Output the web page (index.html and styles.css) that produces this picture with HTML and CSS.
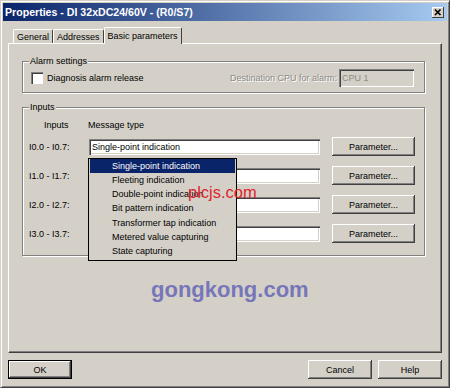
FILE: index.html
```html
<!DOCTYPE html>
<html>
<head>
    <meta charset="utf-8">
    <title>Properties - DI 32xDC24/60V - (R0/S7)</title>
    <link rel="stylesheet" href="styles.css">
</head>
<body>

<div class="window">
    <!--title bar-->
    <div class="titlebar">
        <span class="title">Properties - DI 32xDC24/60V - (R0/S7)</span>
        <span class="close">
            <svg width="12" height="11" viewBox="0 0 12 11">
                <path d="M3 2.5 L8.5 8 M8.5 2.5 L3 8" stroke="#000" stroke-width="1.7" fill="none"/>
            </svg>
        </span>
    </div>

    <!--tabs-->
    <div class="tabs">
        <div class="tab">General</div>
        <div class="tab">Addresses</div>
        <div class="tab active">Basic parameters</div>
    </div>

    <div class="panel">
        <fieldset class="group alarm">
            <legend>Alarm settings</legend>
            <div class="alarm-row">
                <label class="check"><span class="box"></span>Diagnosis alarm release</label>
                <div class="dest">
                    <span class="grey">Destination CPU for alarm:</span>
                    <span class="field disabled">CPU 1</span>
                </div>
            </div>
        </fieldset>

        <fieldset class="group inputs">
            <legend>Inputs</legend>
            <div class="head">
                <span class="head-label">Inputs</span>
                <span>Message type</span>
            </div>
            <div class="row">
                <span class="label">I0.0 - I0.7:</span>
                <div class="field combo">Single-point indication
                    <ul class="popup">
                        <li class="selected">Single-point indication</li>
                        <li>Fleeting indication</li>
                        <li>Double-point indication</li>
                        <li>Bit pattern indication</li>
                        <li>Transformer tap indication</li>
                        <li>Metered value capturing</li>
                        <li>State capturing</li>
                    </ul>
                </div>
                <button class="btn param">Parameter...</button>
            </div>
            <div class="row">
                <span class="label">I1.0 - I1.7:</span>
                <div class="field combo"></div>
                <button class="btn param">Parameter...</button>
            </div>
            <div class="row">
                <span class="label">I2.0 - I2.7:</span>
                <div class="field combo"></div>
                <button class="btn param">Parameter...</button>
            </div>
            <div class="row">
                <span class="label">I3.0 - I3.7:</span>
                <div class="field combo"></div>
                <button class="btn param">Parameter...</button>
            </div>
        </fieldset>

        <!--watermarks-->
        <div class="mark-plc">plcjs.com</div>
        <div class="mark-gk">gongkong.com</div>
    </div>

    <div class="footer">
        <button class="btn ok">OK</button>
        <span class="spacer"></span>
        <button class="btn">Cancel</button>
        <button class="btn">Help</button>
    </div>
</div>

</body>
</html>
```

FILE: styles.css
```css
*{ margin: 0; padding: 0; box-sizing: border-box; }
body{ background: #d4d0c8; font: 9px/12px "Liberation Sans", Arial, sans-serif; color: #000; }
ul{ list-style: none; }

/*window frame*/
.window{ width: 450px; height: 388px; padding: 2px;
    border: 1px solid; border-color: #d4d0c8 #404040 #404040 #d4d0c8;
    box-shadow: inset 1px 1px 0 #fff, inset -1px -1px 0 #808080; }

.titlebar{ height: 18px; display: flex; align-items: center; justify-content: space-between;
    padding: 0 3px 0 2px; background: linear-gradient(to right, #0a246a, #a6caf0); }
.title{ color: #fff; font: bold 10.6px/18px "Liberation Sans", Arial, sans-serif; }
.close{ width: 12px; height: 11px; background: #d4d0c8; display: block;
    box-shadow: inset -1px -1px 0 #404040, inset 1px 1px 0 #fff; }
.close svg{ display: block; }

/*tabs*/
.tabs{ display: flex; align-items: flex-end; height: 16px; margin-top: 6px; padding-left: 10px; }
.tab{ height: 14px; line-height: 14px; padding: 0 3px; background: #d4d0c8;
    border-top: 1px solid #fff; border-left: 1px solid #fff; border-right: 1px solid #404040;
    border-radius: 2px 2px 0 0; }
.tab.active{ height: 17px; line-height: 16px; margin-bottom: -1px; position: relative; z-index: 1; }

/*tab page*/
.panel{ position: relative; height: 310px; margin: 0 5px; background: #d4d0c8;
    border: 1px solid; border-color: #fff #404040 #404040 #fff;
    box-shadow: inset -1px -1px 0 #808080; }

.group{ border: 1px solid #808080; box-shadow: inset 1px 1px 0 #fff, 1px 1px 0 #fff; min-width: 0; }
.group legend{ padding: 0 1px; line-height: 12px; background: #d4d0c8; }
.alarm{ margin: 11px 16px 0 13px; padding: 2px 10px 5px 6px; }
.inputs{ margin: 8px 16px 0 13px; padding: 6px 9px 12px 6px; }

.alarm-row{ display: flex; align-items: center; height: 18px; padding-left: 2px; }
.check{ display: flex; align-items: center; }
.box{ width: 12px; height: 12px; margin-right: 4px; background: #fff;
    box-shadow: inset 1px 1px 0 #808080, inset 2px 2px 0 #404040, inset -1px -1px 0 #fff; }
.dest{ margin-left: auto; display: flex; align-items: center; }
.grey{ color: #8c8a84; text-shadow: 1px 1px 0 #fff; margin-right: 2px; }

.field{ background: #fff; height: 16px; line-height: 16px; padding-left: 3px;
    box-shadow: inset 1px 1px 0 #808080, inset 2px 2px 0 #404040, inset -1px -1px 0 #fff, inset -2px -2px 0 #d4d0c8; }
.field.disabled{ width: 75px; height: 18px; line-height: 18px; background: #d4d0c8; color: #8c8a84; }

.head{ display: flex; padding-left: 15px; height: 12px; }
.head-label{ width: 44px; }

.row{ display: flex; align-items: center; height: 19px; margin-top: 10px; }
.head + .row{ margin-top: 6px; }
.label{ width: 60px; }
.combo{ position: relative; width: 231px; margin-right: 12px; }

/*dropdown list*/
.popup{ position: absolute; left: -1px; top: 19px; width: 149px; z-index: 2;
    padding: 0 1px 1px; background: #d4d0c8; border: 1px solid #000; }
.popup li{ height: 14.33px; line-height: 14px; padding-left: 22px; }
.popup li.selected{ background: #0a246a; color: #fff; }

/*buttons*/
.btn{ font: 9px "Liberation Sans", Arial, sans-serif; color: #000; background: #d4d0c8;
    border: none; width: 64px; height: 19px;
    box-shadow: inset -1px -1px 0 #404040, inset 1px 1px 0 #fff, inset -2px -2px 0 #808080; }
.param{ width: 83px; }
.ok{ border: 1px solid #000; }

.footer{ display: flex; margin-top: 7px; padding: 0 5px; }
.footer .spacer{ flex: 1; }
.footer .btn + .btn{ margin-left: 6px; }

/*watermarks*/
.mark-plc{ position: absolute; left: 179px; top: 140px; z-index: 3;
    font: 16.5px/16px "Liberation Sans", Arial, sans-serif; color: #e0242b; }
.mark-gk{ position: absolute; left: 142px; top: 235px;
    font: bold 22px/22px "Liberation Sans", Arial, sans-serif; color: #7776b9; }
```
